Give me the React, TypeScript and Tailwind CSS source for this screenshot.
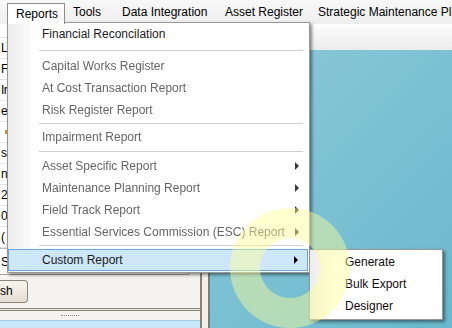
import clsx from 'clsx';

const menuBarItems = [
  { label: 'Reports', w: 'w-[57px]' },
  { label: 'Tools', w: 'w-[49px]' },
  { label: 'Data Integration', w: 'w-[103px]' },
  { label: 'Asset Register', w: 'w-[93px]' },
  { label: 'Strategic Maintenance Planning', w: 'w-[160px]' },
];

const gridCells = ['L', 'F', 'Ir', 'e', '', 's', 'n', '2)', '0', '('];

function Arrow({ dim }: { dim?: boolean }) {
  return (
    <span
      className={clsx(
        'h-0 w-0 border-y-[4px] border-l-[4px] border-y-transparent',
        dim ? 'border-l-[#3a3a3a] blur-[0.5px]' : 'border-l-black'
      )}
    />
  );
}

function MenuItem({
  label,
  disabled,
  sub,
  active,
}: {
  label: string;
  disabled?: boolean;
  sub?: boolean;
  active?: boolean;
}) {
  return (
    <div
      className={clsx(
        'flex h-[22px] items-center',
        active
          ? 'mr-[1px] border border-[#66a7e8] bg-[#cde6f8] pl-[33px] pr-[9px]'
          : 'pl-[34px] pr-[10px]'
      )}
    >
      <span
        className={clsx(
          'flex-1 whitespace-nowrap',
          disabled ? 'text-[#666666] blur-[0.7px]' : 'text-[#1b1b1b]'
        )}
      >
        {label}
      </span>
      {sub && <Arrow dim={disabled} />}
    </div>
  );
}

function Separator({ className }: { className: string }) {
  return (
    <div className={clsx('pl-[31px] pr-[6px]', className)}>
      <div className="h-px bg-[#cfcfcf]" />
    </div>
  );
}

export default function App() {
  return (
    <div className="relative flex h-[328px] w-[452px] flex-col overflow-hidden bg-[#f0f0f0] font-['Liberation_Sans',Arial,sans-serif] text-[12px] text-black">
      {/* Menu bar */}
      <div className="flex h-[24px] shrink-0 items-center overflow-hidden bg-[linear-gradient(#f8f8f8,#eeeeee)] pl-[7px]">
        {menuBarItems.map((m) => (
          <div key={m.label} className={clsx('shrink-0 whitespace-nowrap pl-[9px]', m.w)}>
            {m.label}
          </div>
        ))}
      </div>

      {/* Body */}
      <div className="flex flex-1">
        {/* Left panel */}
        <div className="flex w-[200px] shrink-0 flex-col bg-[#f5f3ef]">
          <div className="h-[14px] border-b border-[#e2e2e2] bg-white" />
          <div className="mr-[10px] flex h-[237px] flex-col rounded-br-[3px] border-b border-r border-[#a8a39a] bg-white">
            {gridCells.map((c, i) => (
              <div
                key={i}
                className="flex h-[21px] shrink-0 items-center border-b border-[#e3e3e3] pl-[1px] leading-none tracking-[-0.5px]"
              >
                {i === 4 ? <span className="ml-[4px] h-[4px] w-[2px] bg-[#e98a2b]" /> : c}
              </div>
            ))}
            <div className="flex flex-1 items-center border-t border-[#b9b9b9] pl-[1px]">Se</div>
          </div>
          <div className="flex h-[33px] items-center">
            <div className="flex h-[23px] w-[28px] items-center rounded-r-[4px] border border-l-0 border-[#8d8576] bg-[linear-gradient(#f7f5f0,#e4ded1)] pb-[1px]">
              sh
            </div>
          </div>
          <div className="h-[3px] border-y border-[#8f877b] bg-[#e9e5dc]" />
          <div className="flex h-[9px] items-center justify-center pr-[60px]">
            <div className="h-px w-[18px] border-t border-dotted border-[#8a8a8a]" />
          </div>
          <div className="flex-1 border-t border-[#9fc9e0] bg-[#c8e8fa]" />
        </div>

        {/* Splitter */}
        <div className="w-[10px] shrink-0 border-x-2 border-l-[#8b8173] border-r-[#7c7c7c] bg-[#f3efe6]" />

        {/* Right content */}
        <div className="flex flex-1 flex-col">
          <div className="h-[26px] shrink-0 bg-[linear-gradient(#fdfdfd,#ececec)]" />
          <div className="flex-1 bg-[linear-gradient(135deg,#8ccad9,#6ab8cd)]" />
        </div>
      </div>

      {/* Reports dropdown */}
      <div className="absolute left-[7px] top-[22px] flex h-[251px] w-[303px] flex-col border border-[#979797] bg-[linear-gradient(90deg,#ececec,#fbfbfb_22px,#ffffff_24px)] shadow-[2px_2px_3px_rgba(0,0,0,0.45)]">
        <MenuItem label="Financial Reconcilation" />
        <Separator className="h-[10px] pt-[5px]" />
        <MenuItem label="Capital Works Register" disabled />
        <MenuItem label="At Cost Transaction Report" disabled />
        <MenuItem label="Risk Register Report" disabled />
        <Separator className="h-[5px] pt-[2px]" />
        <MenuItem label="Impairment Report" disabled />
        <Separator className="h-[7px] pt-[3px]" />
        <MenuItem label="Asset Specific Report" disabled sub />
        <MenuItem label="Maintenance Planning Report" disabled sub />
        <MenuItem label="Field Track Report" disabled sub />
        <MenuItem label="Essential Services Commission (ESC) Report" disabled sub />
        <Separator className="h-[6px] pt-[2px]" />
        <MenuItem label="Custom Report" sub active />
      </div>

      {/* Open Reports tab */}
      <div className="absolute left-[7px] top-[3px] flex h-[21px] w-[58px] items-center border-x border-t border-[#8e8e8e] bg-white pl-[8px] pb-[1px]">
        Reports
      </div>

      {/* Custom Report submenu */}
      <div className="absolute left-[309px] top-[249px] flex h-[71px] w-[134px] flex-col border border-[#979797] bg-[linear-gradient(90deg,#ececec,#fbfbfb_21px,#ffffff_23px)] pt-[1px] shadow-[2px_2px_3px_rgba(0,0,0,0.45)]">
        {['Generate', 'Bulk Export', 'Designer'].map((s) => (
          <div key={s} className="flex h-[22px] items-center pl-[35px] text-[#140a0e]">
            {s}
          </div>
        ))}
      </div>

      {/* Click highlight ring */}
      <svg className="pointer-events-none absolute inset-0" width="452" height="328">
        <path
          d="M230 268a60 60 0 1 0 120 0a60 60 0 1 0 -120 0ZM260 268a30 30 0 1 0 60 0a30 30 0 1 0 -60 0Z"
          fillRule="evenodd"
          fill="rgb(255,255,150)"
          fillOpacity="0.45"
        />
      </svg>
    </div>
  );
}
